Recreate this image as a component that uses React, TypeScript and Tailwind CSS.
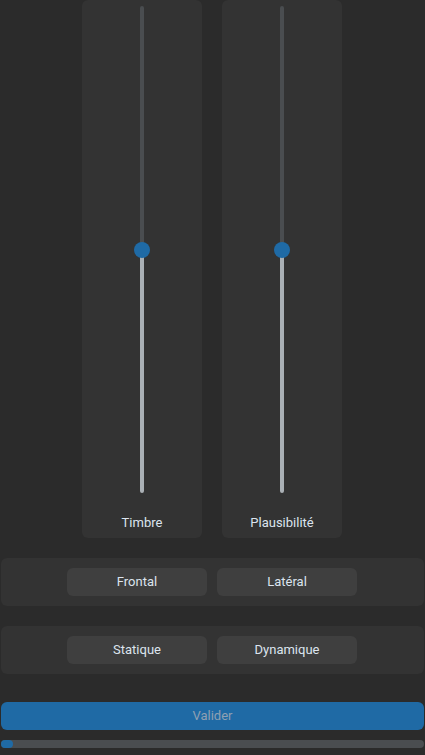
import React from "react";

function VSlider({ label }: { label: string }) {
  return (
    <div className="flex h-[538px] w-[120px] flex-col items-center rounded-md bg-[#333333] pt-[6px]">
      <div className="relative flex h-[487px] w-4 flex-col items-center">
        <div className="h-1/2 w-1 rounded-t-sm bg-[#4a4d50]" />
        <div className="h-1/2 w-1 rounded-b-sm bg-[#aab0b5]" />
        <div className="absolute left-0 top-[236px] h-4 w-4 rounded-full bg-[#1f6aa5]" />
      </div>
      <div className="mt-[22px] h-4 text-[13px] leading-4 text-[#dce4ee]">{label}</div>
    </div>
  );
}

function ChoiceRow({ left, right }: { left: string; right: string }) {
  return (
    <div className="mx-[1px] flex h-[48px] items-center justify-center gap-[10px] rounded-md bg-[#333333] pr-[1px]">
      <button className="h-[28px] w-[140px] rounded-md bg-[#3f3f3f] text-[13px] text-[#dce4ee]">
        {left}
      </button>
      <button className="h-[28px] w-[140px] rounded-md bg-[#3f3f3f] text-[13px] text-[#dce4ee]">
        {right}
      </button>
    </div>
  );
}

export default function App() {
  return (
    <main
      className="flex h-[755px] w-[425px] flex-col bg-[#2b2b2b]"
      style={{ fontFamily: "Roboto, 'Liberation Sans', sans-serif" }}
    >
      <div className="flex gap-5 pl-[82px]">
        <VSlider label="Timbre" />
        <VSlider label="Plausibilité" />
      </div>

      <div className="mt-5">
        <ChoiceRow left="Frontal" right="Latéral" />
      </div>
      <div className="mt-5">
        <ChoiceRow left="Statique" right="Dynamique" />
      </div>

      <button className="mx-[1px] mt-[28px] h-[28px] rounded-md bg-[#1f6aa5] text-[13px] text-[#8fa0b2]">
        Valider
      </button>

      <div className="mx-[1px] mt-[10px] h-2 rounded-sm bg-[#4a4d50]">
        <div className="h-2 w-3 rounded-sm bg-[#1f6aa5]" />
      </div>
    </main>
  );
}
